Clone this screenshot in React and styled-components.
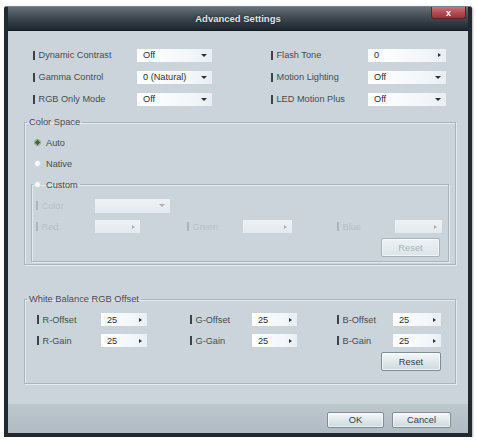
import React from 'react'
import styled, { createGlobalStyle } from 'styled-components'

const Page = createGlobalStyle`
body {
    margin: 0;
    background: #ffffff;
    font-family: "Liberation Sans", Arial, sans-serif;
}
`;

const Window = styled.div`
margin: 6px 0 0 4px;
width: 468px;
height: 431px;
box-sizing: border-box;
display: flex;
flex-direction: column;
border: 4px solid #222a31;
border-top: 1px solid #78828b;
border-radius: 3px 3px 0 0;
background: #cbd4db;
box-shadow: 1px 1px 2px rgba(0, 0, 0, .3);
`;
const TitleBar = styled.div`
display: grid;
grid-template-columns: 1fr auto 1fr;
align-items: center;
height: 24px;
box-sizing: border-box;
background: linear-gradient(#66707a 0%, #444e57 40%, #1d262e 100%);
border-bottom: 1px solid #131a20;
`;
const Title = styled.div`
grid-column: 2;
color: #dfe6eb;
font-size: 9.5px;
font-weight: bold;
text-shadow: 0 0 3px rgba(0, 0, 0, .6);
`;
const CloseButton = styled.div`
justify-self: end;
align-self: start;
width: 33px;
height: 11px;
margin-right: 2px;
display: flex;
align-items: center;
justify-content: center;
color: #fff;
font-size: 9px;
font-weight: bold;
background: linear-gradient(#cf7278, #b14a50 55%, #96363b);
border: 1px solid #5e2226;
border-top: none;
border-radius: 0 0 3px 3px;
`;
const Body = styled.div`
flex: 1;
display: flex;
flex-direction: column;
padding: 13px 12px 0 16px;
color: #464c52;
font-size: 9.2px;
`;
const Columns = styled.div`
display: flex;
gap: 59px;
margin-left: 9px;
`;
const FieldGrid = styled.div`
display: grid;
grid-template-columns: ${p => p.$cols};
grid-auto-rows: ${p => p.$row || 21}px;
align-items: center;
`;
const Label = styled.span`
display: flex;
align-items: center;
white-space: nowrap;
color: ${p => p.$disabled ? '#b6c0c7' : '#464c52'};
&::before {
    content: "";
    display: inline-block;
    width: 1.5px;
    height: 9px;
    margin-right: 4px;
    background: ${p => p.$disabled ? '#abb5bd' : '#3c4248'};
}
`;
const Box = styled.div`
grid-column: ${p => p.$span ? `span ${p.$span}` : 'auto'};
justify-self: start;
width: ${p => p.$w}px;
height: ${p => p.$h || 13}px;
box-sizing: border-box;
display: flex;
align-items: center;
justify-content: space-between;
padding: 0 5px 0 6px;
color: #2a2f34;
background: ${p => p.$disabled
        ? 'linear-gradient(#eef2f5, #e3e9ee)'
        : 'linear-gradient(90deg, #ffffff 0%, #f3f7fa 70%, #e8eef3 100%)'};
`;
const DownArrow = styled.span`
width: 0;
height: 0;
border-left: 3px solid transparent;
border-right: 3px solid transparent;
border-top: 3px solid ${p => p.$disabled ? '#a8b2ba' : '#2c3136'};
`;
const SpinArrow = styled.span`
width: 0;
height: 0;
border-top: 2.5px solid transparent;
border-bottom: 2.5px solid transparent;
border-left: 3px solid ${p => p.$disabled ? '#a8b2ba' : '#2c3136'};
`;
const GroupBox = styled.fieldset`
margin: ${p => p.$mt || 0}px 0 0 0;
padding: ${p => p.$pad};
min-width: 0;
border: 1px solid #a9b4bd;
box-shadow: inset 1px 1px 0 #e4eaef, 1px 1px 0 #e4eaef;
`;
const Legend = styled.legend`
margin-left: ${p => p.$ml}px;
padding: 0 2px;
font-size: 9.3px;
line-height: 12px;
color: #464c52;
`;
const RadioLegend = styled.legend`
margin-left: -3px;
padding: 0 2px 0 1px;
height: 21px;
display: flex;
align-items: center;
gap: 5px;
`;
const RadioRow = styled.div`
height: 21px;
display: flex;
align-items: center;
gap: 5px;
padding-left: 3px;
`;
const Radio = styled.span`
width: 7px;
height: 7px;
box-sizing: border-box;
border-radius: 50%;
border: 1px solid ${p => p.$checked ? '#8c9a8a' : '#d0d8dd'};
background: ${p => p.$checked
        ? 'radial-gradient(circle, #3f6b2f 0 2px, #e9efe6 2.5px)'
        : '#f7f9fa'};
`;
const ButtonRow = styled.div`
display: flex;
justify-content: flex-end;
padding-right: ${p => p.$pr || 0}px;
margin-top: ${p => p.$mt || 0}px;
`;
const Button = styled.div`
width: ${p => p.$w}px;
height: ${p => p.$h}px;
box-sizing: border-box;
display: flex;
align-items: center;
justify-content: center;
font-size: 9.3px;
color: ${p => p.$disabled ? '#a9b4bc' : '#343a3f'};
background: ${p => p.$disabled
        ? 'linear-gradient(#edf2f4, #dbe4e8)'
        : 'linear-gradient(#f5f8f9, #e0e8ec 50%, #ccd9de)'};
border: 1px solid ${p => p.$disabled ? '#a7b3ba' : '#7e8e97'};
border-radius: 2px;
box-shadow: inset 0 0 0 1px rgba(255, 255, 255, .6);
`;
const Footer = styled.div`
height: 29px;
box-sizing: border-box;
display: flex;
justify-content: flex-end;
align-items: flex-start;
gap: 8px;
padding: 8px 17px 0 0;
background: linear-gradient(#bcc7ce, #b0bbc3);
`;

const Select = ({ value, w, h, span, spin, disabled }) => (
    <Box $w={w} $h={h} $span={span} $disabled={disabled}>
        <span>{value}</span>
        {spin ? <SpinArrow $disabled={disabled} /> : <DownArrow $disabled={disabled} />}
    </Box>
)

const leftSettings = [
    ['Dynamic Contrast', 'Off'],
    ['Gamma Control', '0 (Natural)'],
    ['RGB Only Mode', 'Off'],
]
const rightSettings = [
    ['Flash Tone', '0', true],
    ['Motion Lighting', 'Off'],
    ['LED Motion Plus', 'Off'],
]

const wbCols = '64px 46px 43px 62px 45px 40px 56px 48px'
const customCols = '59px 45px 47px 56px 49px 45px 58px 47px'

const App = () => {
    return <>
        <Page />
        <Window>
            <TitleBar>
                <Title>Advanced Settings</Title>
                <CloseButton>x</CloseButton>
            </TitleBar>
            <Body>
                <Columns>
                    <FieldGrid $cols="104px 75px" $row={22}>
                        {leftSettings.map(([label, value]) => (
                            <React.Fragment key={label}>
                                <Label>{label}</Label>
                                <Select value={value} w={75} />
                            </React.Fragment>
                        ))}
                    </FieldGrid>
                    <FieldGrid $cols="97px 78px" $row={22}>
                        {rightSettings.map(([label, value, spin]) => (
                            <React.Fragment key={label}>
                                <Label>{label}</Label>
                                <Select value={value} w={78} spin={spin} />
                            </React.Fragment>
                        ))}
                    </FieldGrid>
                </Columns>

                <GroupBox $mt={6} $pad="4px 6px 2px 6px">
                    <Legend $ml={-4}>Color Space</Legend>
                    <RadioRow><Radio $checked />Auto</RadioRow>
                    <RadioRow><Radio />Native</RadioRow>
                    <GroupBox $pad="0 6px 4px 4px">
                        <RadioLegend><Radio />Custom</RadioLegend>
                        <FieldGrid $cols={customCols}>
                            <Label $disabled>Color</Label>
                            <Select w={75} h={14} span={2} disabled />
                        </FieldGrid>
                        <FieldGrid $cols={customCols}>
                            <Label $disabled>Red</Label>
                            <Select w={45} spin disabled />
                            <span />
                            <Label $disabled>Green</Label>
                            <Select w={49} spin disabled />
                            <span />
                            <Label $disabled>Blue</Label>
                            <Select w={47} spin disabled />
                        </FieldGrid>
                        <ButtonRow $pr={2} $mt={1}>
                            <Button $w={59} $h={19} $disabled>Reset</Button>
                        </ButtonRow>
                    </GroupBox>
                </GroupBox>

                <GroupBox $mt={28} $pad="4px 14px 12px 12px">
                    <Legend $ml={-10}>White Balance RGB Offset</Legend>
                    <FieldGrid $cols={wbCols}>
                        <Label>R-Offset</Label>
                        <Select value="25" w={46} spin />
                        <span />
                        <Label>G-Offset</Label>
                        <Select value="25" w={45} spin />
                        <span />
                        <Label>B-Offset</Label>
                        <Select value="25" w={48} spin />
                        <Label>R-Gain</Label>
                        <Select value="25" w={46} spin />
                        <span />
                        <Label>G-Gain</Label>
                        <Select value="25" w={45} spin />
                        <span />
                        <Label>B-Gain</Label>
                        <Select value="25" w={48} spin />
                    </FieldGrid>
                    <ButtonRow $mt={1}>
                        <Button $w={60} $h={19}>Reset</Button>
                    </ButtonRow>
                </GroupBox>
            </Body>
            <Footer>
                <Button $w={57} $h={16}>OK</Button>
                <Button $w={59} $h={16}>Cancel</Button>
            </Footer>
        </Window>
    </>
}

export default App
